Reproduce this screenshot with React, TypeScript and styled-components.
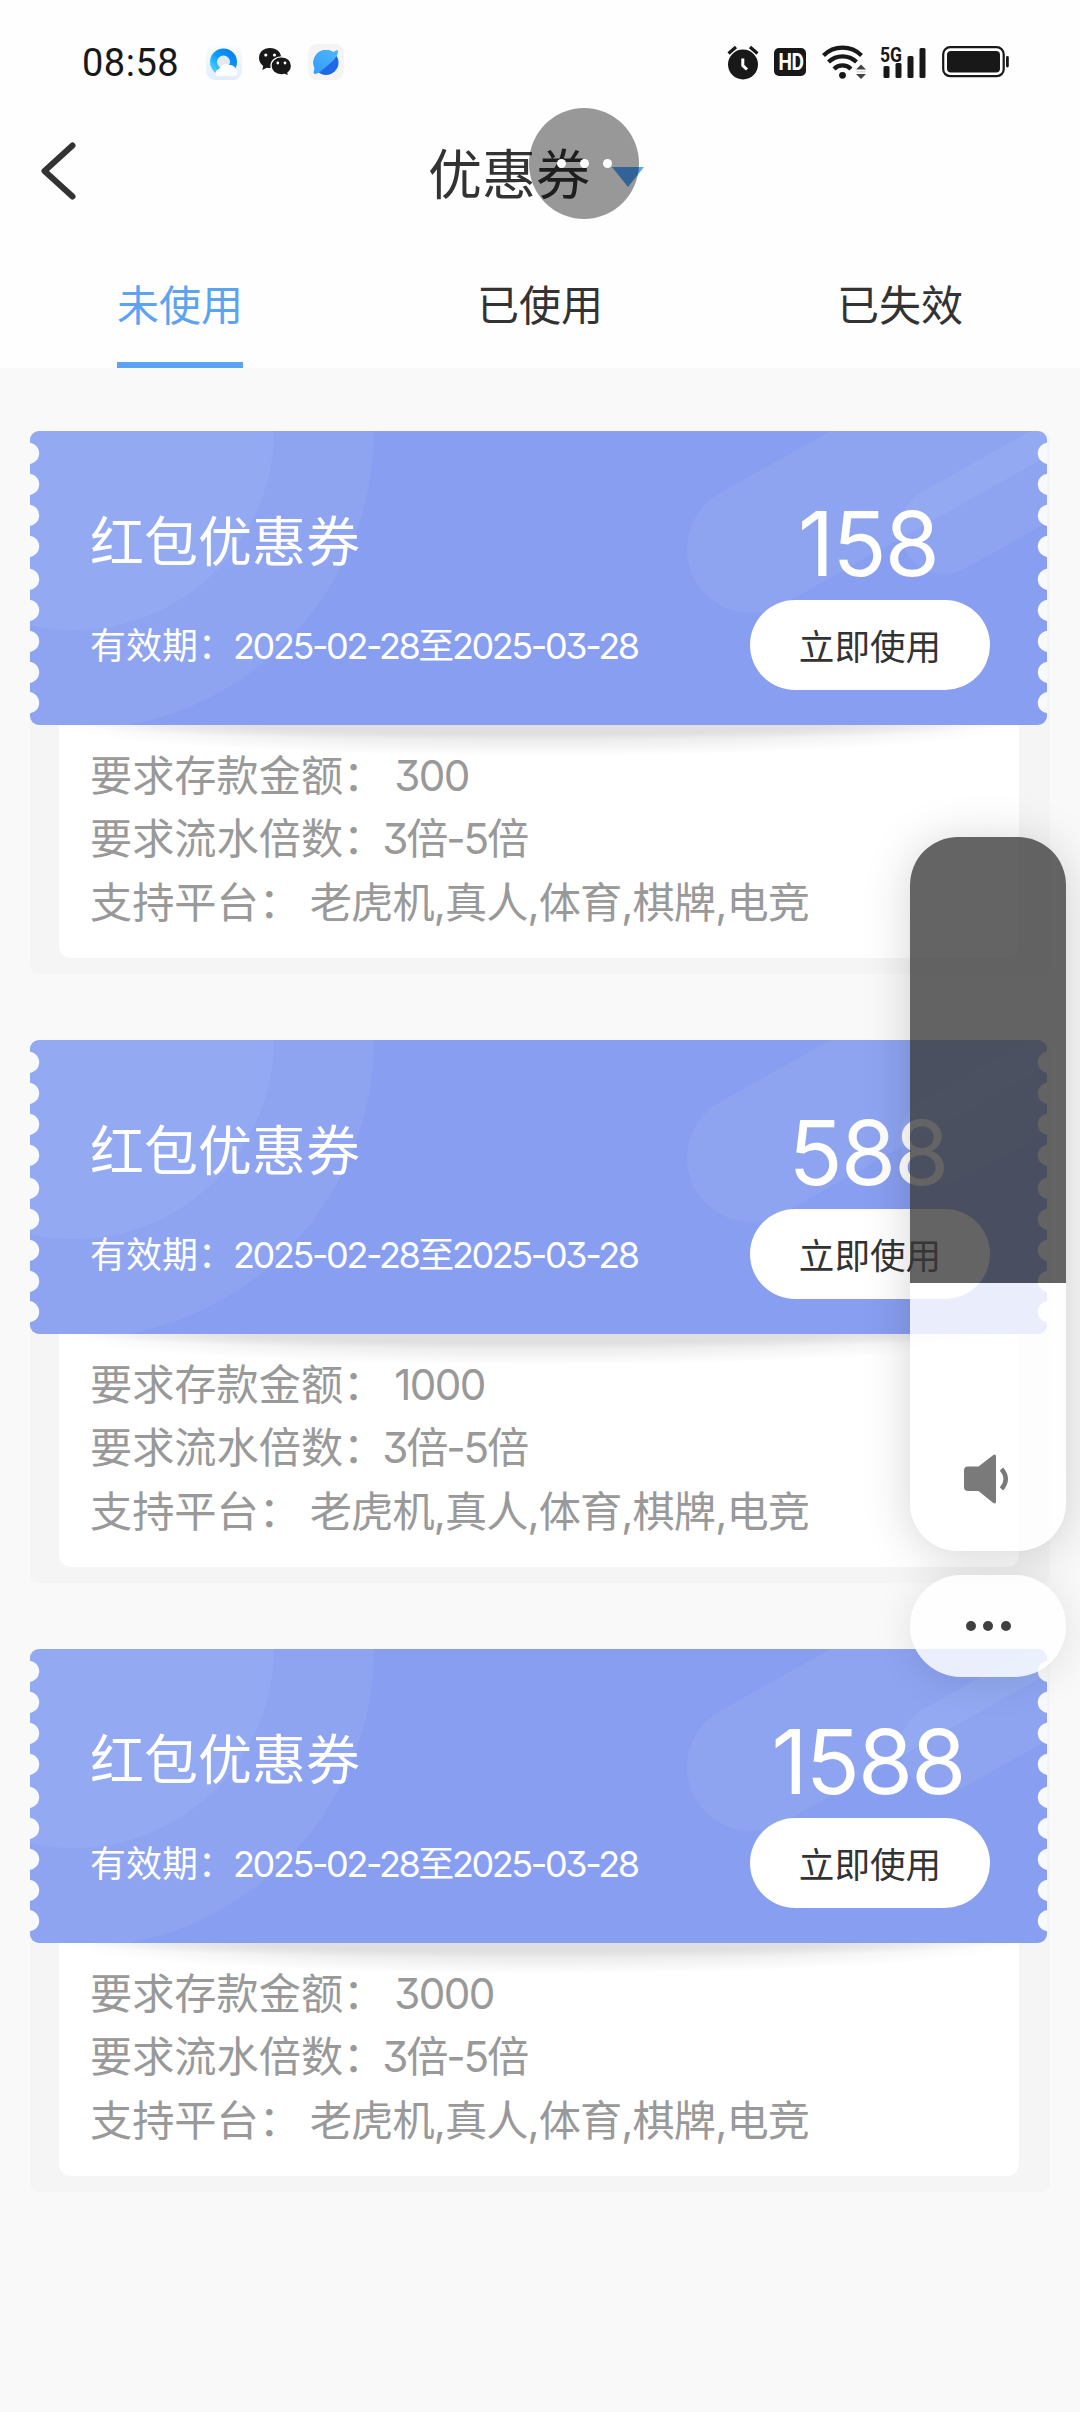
import React from "react";
import styled, { createGlobalStyle } from "styled-components";

const GlobalStyle = createGlobalStyle`
  html, body { margin: 0; padding: 0; background: #f9f9f9; }
  *, *::before, *::after { box-sizing: border-box; }
  body {
    font-family: Inter, "Noto Sans CJK SC", sans-serif;
    font-feature-settings: "cv09" 1;
    color: #333;
  }
`;

const Screen = styled.div`
  position: relative;
  width: 1080px;
  height: 2412px;
  overflow: hidden;
  background: #f9f9f9;
  display: flex;
  flex-direction: column;
`;

const Header = styled.header`
  height: 368px;
  background: #fefefe;
  display: flex;
  flex-direction: column;
`;

const StatusBar = styled.div`
  height: 108px;
  padding: 16px 70px 0 82px;
  display: flex;
  align-items: center;
`;

const Clock = styled.span`
  width: 124px;
  padding-top: 1px;
  font: 400 38px/40px Roboto, sans-serif;
  letter-spacing: 0.5px;
  color: #181818;
`;

const AppIcons = styled.div`
  display: flex;
  align-items: center;
  gap: 16px;
  flex: 1;
`;

const SystemIcons = styled.div`
  display: flex;
  align-items: center;
`;

const TitleBar = styled.div`
  height: 136px;
  display: grid;
  grid-template-columns: 428px 1fr;
  align-items: center;
`;

const BackButton = styled.button`
  border: 0;
  padding: 0 0 11px 37px;
  background: none;
  display: flex;
`;

const TitleGroup = styled.div`
  display: flex;
  align-items: center;
  gap: 22px;
`;

const PageTitle = styled.h1`
  margin: 0;
  font-size: 54px;
  line-height: 64px;
  font-weight: 400;
  white-space: nowrap;
`;

const Triangle = styled.i`
  margin-top: 1px;
  border: 16px solid transparent;
  border-top: 20px solid #55a6fa;
  border-bottom: 0;
`;

const Tabs = styled.nav`
  flex: 1;
  display: grid;
  grid-template-columns: repeat(3, 360px);
  justify-items: center;
`;

const Tab = styled.button<{ $active?: boolean }>`
  width: 126px;
  border: 0;
  padding: 6px 0 0;
  background: none;
  font: inherit;
  font-size: 42px;
  line-height: 112px;
  white-space: nowrap;
  color: ${(p) => (p.$active ? "#5ca4f2" : "#333")};
  border-bottom: 6px solid ${(p) => (p.$active ? "#5ca4f2" : "transparent")};
`;

const List = styled.main`
  padding: 63px 30px 0;
  display: flex;
  flex-direction: column;
  gap: 66px;
`;

const Card = styled.article`
  height: 543px;
  background: #f5f5f5;
  border-radius: 8px;
`;

const Ticket = styled.section`
  position: relative;
  width: 1017px;
  height: 294px;
  padding-left: 60px;
  background: #889ef0;
  border-radius: 9px;
  display: grid;
  grid-template-columns: 660px 240px;
  overflow: hidden;
`;

const TicketArt = styled.svg`
  position: absolute;
  inset: 0;
`;

const TicketInfo = styled.div`
  position: relative;
  padding-top: 80px;
  color: #fff;
`;

const CouponName = styled.h2`
  margin: 0;
  font-size: 54px;
  line-height: 64px;
  font-weight: 400;
`;

const Validity = styled.p`
  margin: 47px 0 0;
  font-size: 36px;
  line-height: 48px;
  white-space: nowrap;
`;

const DateText = styled.span`
  letter-spacing: -2.4px;
  margin-left: -1px;
`;

const TicketAction = styled.div`
  position: relative;
  padding-top: 63px;
  display: flex;
  flex-direction: column;
  align-items: center;
`;

const Amount = styled.strong`
  font-size: 89px;
  line-height: 100px;
  height: 106px;
  font-weight: 400;
  letter-spacing: -1.8px;
  margin-left: -4px;
  color: #fff;
`;

const UseButton = styled.button`
  width: 240px;
  height: 90px;
  border: 0;
  padding: 0 0 1px;
  border-radius: 45px;
  background: #fff;
  font: inherit;
  font-size: 35.600px;
  color: #333;
`;

const Details = styled.section`
  width: 960px;
  height: 233px;
  margin-left: 29px;
  padding: 19px 0 0 31px;
  border-radius: 0 0 12px 12px;
  background:
    radial-gradient(ellipse 460px 15px at 50% 0, #e0e0e0 0 60%, rgba(224, 224, 224, 0) 100%),
    radial-gradient(ellipse 480px 31px at 50% 0, #e9e9e9 0 30%, #f0f0f0 60%, rgba(255, 255, 255, 0) 100%),
    #fff;
`;

const DetailRow = styled.div`
  height: 63.3px;
  font-size: 42.2px;
  line-height: 63px;
  color: #999;
  white-space: pre;
`;

const DetailValue = styled.span<{ $tracking: number }>`
  letter-spacing: ${(p) => p.$tracking}px;
  margin-left: -3px;
`;

const FloatingDots = styled.div`
  position: absolute;
  left: 529px;
  top: 108px;
  width: 110px;
  height: 111px;
  border-radius: 50%;
  background: rgba(0, 0, 0, 0.4);
  display: flex;
  align-items: center;
  justify-content: center;
  gap: 14px;
`;

const Dot = styled.i<{ $size: number; $color: string }>`
  width: ${(p) => p.$size}px;
  height: ${(p) => p.$size}px;
  border-radius: 50%;
  background: ${(p) => p.$color};
`;

const VolumePanel = styled.aside`
  position: absolute;
  left: 910px;
  top: 837px;
  width: 156px;
  display: flex;
  flex-direction: column;
  gap: 24px;
`;

const VolumeSlider = styled.div`
  height: 714px;
  border-radius: 48px;
  overflow: hidden;
  box-shadow: 0 4px 48px rgba(0, 0, 0, 0.17);
  display: flex;
  flex-direction: column;
`;

const VolumeEmpty = styled.div`
  height: 446px;
  background: rgba(56, 56, 56, 0.775);
`;

const VolumeLevel = styled.div`
  flex: 1;
  background: rgba(255, 255, 255, 0.81);
  display: flex;
  flex-direction: column;
  align-items: center;
  justify-content: flex-end;
  padding: 0 2px 47px 0;
`;

const MoreButton = styled.button`
  height: 102px;
  border: 0;
  padding: 0;
  border-radius: 51px;
  background: rgba(255, 255, 255, 0.82);
  box-shadow: 0 4px 40px rgba(0, 0, 0, 0.1);
  display: flex;
  align-items: center;
  justify-content: center;
  gap: 7.5px;
`;

const BrowserIcon = () => (
  <svg width="36" height="36" viewBox="0 0 36 36">
    <defs>
      <linearGradient id="qbg" x1="0" y1="0" x2="0" y2="1">
        <stop offset="0" stopColor="#fbfdff" />
        <stop offset="1" stopColor="#e3edf8" />
      </linearGradient>
      <linearGradient id="qring" x1="0" y1="1" x2="1" y2="0">
        <stop offset="0" stopColor="#55d2fb" />
        <stop offset="0.5" stopColor="#0a9cfb" />
        <stop offset="1" stopColor="#087df0" />
      </linearGradient>
    </defs>
    <rect width="36" height="36" rx="9" fill="url(#qbg)" />
    <circle cx="17.500" cy="18" r="10" fill="#e4e8f2" stroke="url(#qring)" strokeWidth="7" />
    <path d="M11 32a4 4 0 0 1 2-7a7 7 0 0 1 10-4a6 6 0 0 1 7 5a3.500 3.500 0 0 1-1 6z" fill="#fff" />
  </svg>
);

const WeChatIcon = () => (
  <svg width="34" height="30" viewBox="0 0 34 30">
    <path d="M12 1C5.400 1 1 5.300 1 11c0 3.200 1.600 6 4.200 7.900L4.300 23l4.500-2.300c1 .3 2.100.4 3.200.4 6.600 0 11.200-4.400 11.200-10.100S18.600 1 12 1z" fill="#181818" />
    <path d="M23.300 9.800c-5.900 0-10.300 3.900-10.300 9s4.400 9.100 10.300 9.100c1.200 0 2.400-.2 3.500-.5l4 2-.9-3.500c2.200-1.700 3.600-4.200 3.600-7.100 0-5.100-4.300-9-10.200-9z" fill="#181818" stroke="#fefefe" strokeWidth="1.300" />
    <circle cx="7.800" cy="8" r="1.600" fill="#fff" />
    <circle cx="16.500" cy="8" r="1.600" fill="#fff" />
    <circle cx="19.800" cy="16" r="1.400" fill="#fff" />
    <circle cx="27" cy="16" r="1.400" fill="#fff" />
  </svg>
);

const PlanetIcon = () => (
  <svg width="36" height="36" viewBox="0 0 36 36">
    <defs>
      <linearGradient id="pl" x1="0.900" y1="0" x2="0.200" y2="1">
        <stop offset="0" stopColor="#4bb6fd" />
        <stop offset="1" stopColor="#389cf8" />
      </linearGradient>
    </defs>
    <rect width="36" height="36" rx="9" fill="#f4f4f5" />
    <circle cx="18" cy="18.500" r="12.500" fill="#1f68e6" />
    <path d="M6.500 24C3 15 9 6 18 6c4 0 6 1 7.500 2 3-2.500 5-2.500 4.500 0-.5 5-6 10-11 14-5 4.500-11 9.500-13 7.500-1-1 .5-4 .5-5.500z" fill="url(#pl)" />
  </svg>
);

const AlarmIcon = () => (
  <svg width="32" height="35" viewBox="0 0 32 35">
    <circle cx="16" cy="19.500" r="15" fill="#181818" />
    <path d="M1.500 8.500L9 2M30.500 8.500L23 2" stroke="#181818" strokeWidth="3.200" />
    <path d="M15.800 13.500v7l4.200 4" stroke="#fff" strokeWidth="3" fill="none" />
  </svg>
);

const HdBadge = styled.span`
  width: 32px;
  height: 28px;
  margin: 0 16px 0 15px;
  border-radius: 5px;
  background: #181818;
  color: #fff;
  font: 700 23px/29px Roboto, sans-serif;
  display: flex;
  justify-content: center;
  letter-spacing: -0.6px;
  padding: 0 0 0 1px;
  span { transform: scaleX(0.83); }
`;

const WifiIcon = () => (
  <svg width="46" height="36" viewBox="0 0 46 36">
    <g fill="none" stroke="#181818" strokeWidth="4.200">
      <path d="M1.500 11.500a27 27 0 0 1 38 0" />
      <path d="M6.500 18a20 20 0 0 1 28 0" />
      <path d="M12 25a12 12 0 0 1 17 0" />
    </g>
    <circle cx="20.500" cy="31.300" r="3.400" fill="#181818" />
    <path d="M34 25.500l5-5 5 5zM34 30l5 5 5-5z" fill="#444" />
    <path d="M34.500 27.800h9" stroke="#ccc" strokeWidth="1" />
  </svg>
);

const SignalGlyph = styled.svg`
  margin: 0 13px 0 11px;
`;

const SignalIcon = () => (
  <SignalGlyph width="50" height="44" viewBox="0 -4 50 44">
    <text x="1" y="17.500" fontFamily="Roboto, sans-serif" fontWeight="700" fontSize="20.500" textLength="22" lengthAdjust="spacingAndGlyphs" fill="#181818">5G</text>
    <g fill="#181818">
      <rect x="4.500" y="22" width="6" height="12" rx="1.500" />
      <rect x="16.500" y="19" width="6" height="15" rx="1.500" />
      <rect x="28.500" y="12" width="6" height="22" rx="1.500" />
      <rect x="40.500" y="4" width="6" height="30" rx="1.500" />
    </g>
  </SignalGlyph>
);

const BatteryIcon = () => (
  <svg width="68" height="32" viewBox="0 0 68 32">
    <rect x="1.200" y="1.200" width="60.500" height="29" rx="7" fill="none" stroke="#181818" strokeWidth="2.200" />
    <rect x="5" y="5" width="53" height="21.500" rx="4" fill="#181818" />
    <rect x="64" y="10" width="2.800" height="11.500" rx="1.400" fill="#181818" />
  </svg>
);

const BackIcon = () => (
  <svg width="42" height="62" viewBox="0 0 42 62">
    <path d="M35.500 5.500L7.500 31l28 25.500" fill="none" stroke="#333" strokeWidth="6" strokeLinecap="round" strokeLinejoin="round" />
  </svg>
);

const SpeakerIcon = () => (
  <svg width="46" height="50" viewBox="0 0 46 50">
    <path d="M4 12.500h10.500L29 1.200q3-2 3 1.500v44.600q0 3.500-3 1.500L14.500 37H4q-4 0-4-4V16.500q0-4 4-4z" fill="#7a7a7a" />
    <path d="M37.500 15q8.500 10 0 20" fill="none" stroke="#7a7a7a" strokeWidth="4.400" />
  </svg>
);

const NOTCHES = [22.3, 53.3, 84.3, 115.3, 148.3, 179.3, 210.3, 241.3, 271.7];

const TicketBackground = () => (
  <TicketArt width="1017" height="294" viewBox="0 0 1017 294">
    <g fill="#c0dcff" fillOpacity="0.110">
      <circle cx="44" cy="-1" r="300" />
      <circle cx="44" cy="-1" r="200" />
      <rect x="657" y="54" width="600" height="128" rx="64" transform="rotate(-29.300 721 118)" />
      <rect x="870" y="55" width="400" height="88" rx="44" transform="rotate(-29.300 914 99)" />
    </g>
    <g fill="#f8f9fb">
      {NOTCHES.map((y) => (
        <React.Fragment key={y}>
          <circle cx="-1.500" cy={y} r="10.700" />
          <circle cx="1018.500" cy={y} r="10.700" />
        </React.Fragment>
      ))}
    </g>
  </TicketArt>
);

interface Coupon {
  amount: string;
  deposit: string;
}

const COUPONS: Coupon[] = [
  { amount: "158", deposit: "300" },
  { amount: "588", deposit: "1000" },
  { amount: "1588", deposit: "3000" },
];

const CouponCard = ({ amount, deposit }: Coupon) => (
  <Card>
    <Ticket>
      <TicketBackground />
      <TicketInfo>
        <CouponName>红包优惠券</CouponName>
        <Validity>
          有效期：<DateText>2025-02-28至2025-03-28</DateText>
        </Validity>
      </TicketInfo>
      <TicketAction>
        <Amount>{amount}</Amount>
        <UseButton>立即使用</UseButton>
      </TicketAction>
    </Ticket>
    <Details>
      <DetailRow>要求存款金额： <DetailValue $tracking={-1.6}>{deposit}</DetailValue></DetailRow>
      <DetailRow>要求流水倍数：<DetailValue $tracking={-2.2}>3倍-5倍</DetailValue></DetailRow>
      <DetailRow>支持平台： <DetailValue $tracking={-0.9}>老虎机,真人,体育,棋牌,电竞</DetailValue></DetailRow>
    </Details>
  </Card>
);

export default function App() {
  return (
    <>
      <GlobalStyle />
      <Screen lang="zh-CN">
        <Header>
          <StatusBar>
            <Clock>08:58</Clock>
            <AppIcons>
              <BrowserIcon />
              <WeChatIcon />
              <PlanetIcon />
            </AppIcons>
            <SystemIcons>
              <AlarmIcon />
              <HdBadge><span>HD</span></HdBadge>
              <WifiIcon />
              <SignalIcon />
              <BatteryIcon />
            </SystemIcons>
          </StatusBar>
          <TitleBar>
            <BackButton aria-label="返回">
              <BackIcon />
            </BackButton>
            <TitleGroup>
              <PageTitle>优惠券</PageTitle>
              <Triangle />
            </TitleGroup>
          </TitleBar>
          <Tabs>
            <Tab $active>未使用</Tab>
            <Tab>已使用</Tab>
            <Tab>已失效</Tab>
          </Tabs>
        </Header>
        <List>
          {COUPONS.map((c) => (
            <CouponCard key={c.amount} {...c} />
          ))}
        </List>
        <FloatingDots>
          <Dot $size={9} $color="#fff" />
          <Dot $size={9} $color="#fff" />
          <Dot $size={9} $color="#fff" />
        </FloatingDots>
        <VolumePanel>
          <VolumeSlider>
            <VolumeEmpty />
            <VolumeLevel>
              <SpeakerIcon />
            </VolumeLevel>
          </VolumeSlider>
          <MoreButton aria-label="更多">
            <Dot $size={10} $color="#404040" />
            <Dot $size={10} $color="#404040" />
            <Dot $size={10} $color="#404040" />
          </MoreButton>
        </VolumePanel>
      </Screen>
    </>
  );
}
